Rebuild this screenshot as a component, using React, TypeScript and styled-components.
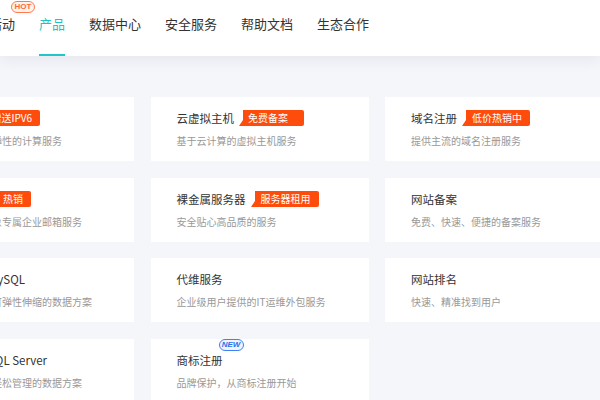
import styled, { createGlobalStyle } from "styled-components";

const GlobalStyle = createGlobalStyle`
  html, body {
    margin: 0;
    padding: 0;
    width: 600px;
    height: 400px;
    overflow: hidden;
    background: #f5f6fa;
  }
  body {
    font-family: "Noto Sans CJK SC", "Noto Sans", sans-serif;
    color: #333;
  }
`;

type Product = {
  title: string;
  desc: string;
  tag?: string;
  wideTag?: boolean;
  isNew?: boolean;
};

const navItems = [
  { label: "活动", hot: true },
  { label: "产品", active: true },
  { label: "数据中心" },
  { label: "安全服务" },
  { label: "帮助文档" },
  { label: "生态合作" },
];

// three columns, row by row; null = empty slot
const products: (Product | null)[] = [
  { title: "云主机", tag: "赠送IPV6", desc: "安全稳定、弹性的计算服务" },
  { title: "云虚拟主机", tag: "免费备案", wideTag: true, desc: "基于云计算的虚拟主机服务" },
  { title: "域名注册", tag: "低价热销中", desc: "提供主流的域名注册服务" },
  { title: "企业邮箱", tag: "热销", desc: "提升品牌形象专属企业邮箱服务" },
  { title: "裸金属服务器", tag: "服务器租用", desc: "安全贴心高品质的服务" },
  { title: "网站备案", desc: "免费、快速、便捷的备案服务" },
  { title: "云数据库MySQL", desc: "稳定可靠、可弹性伸缩的数据方案" },
  { title: "代维服务", desc: "企业级用户提供的IT运维外包服务" },
  { title: "网站排名", desc: "快速、精准找到用户" },
  { title: "云数据库SQL Server", desc: "安全稳定、轻松管理的数据方案" },
  { title: "商标注册", isNew: true, desc: "品牌保护，从商标注册开始" },
  null,
];

export default function App() {
  return (
    <>
      <GlobalStyle />
      <Header>
        <Nav>
          {navItems.map((item) => (
            <NavItem key={item.label} $active={!!item.active}>
              <NavLabel>
                {item.label}
                {item.hot && <HotBadge>HOT</HotBadge>}
              </NavLabel>
            </NavItem>
          ))}
        </Nav>
      </Header>
      <Body>
        <Grid>
          {products.map((p, i) =>
            p ? (
              <Card key={i}>
                <TitleRow>
                  <Title>
                    {p.title}
                    {p.isNew && <NewBadge>NEW</NewBadge>}
                  </Title>
                  {p.tag && <Tag $wide={!!p.wideTag}>{p.tag}</Tag>}
                </TitleRow>
                <Desc>{p.desc}</Desc>
              </Card>
            ) : (
              <div key={i} />
            )
          )}
        </Grid>
      </Body>
    </>
  );
}

const Header = styled.header`
  height: 56px;
  background: #fff;
  box-shadow: 0 4px 14px rgba(30, 45, 90, 0.07);
  position: relative;
  z-index: 1;
`;

const Nav = styled.nav`
  display: flex;
  gap: 24px;
  margin-left: -11px;
  height: 100%;
`;

const NavItem = styled.div<{ $active: boolean }>`
  box-sizing: border-box;
  height: 56px;
  padding-top: 14px;
  font-size: 13px;
  line-height: 20px;
  white-space: nowrap;
  color: ${(p) => (p.$active ? "#1fc3c6" : "#333")};
  border-bottom: 2px solid ${(p) => (p.$active ? "#22c6c8" : "transparent")};
`;

const NavLabel = styled.span`
  position: relative;
  display: inline-block;
`;

const HotBadge = styled.span`
  position: absolute;
  left: 22px;
  top: -13px;
  box-sizing: border-box;
  width: 24px;
  height: 12px;
  border: 1px solid #ff7b4f;
  border-radius: 6px;
  background: #fff1eb;
  color: #ff6a3d;
  font-family: "Liberation Sans", Arial, sans-serif;
  font-size: 8px;
  font-weight: 700;
  line-height: 10px;
  text-align: center;
`;

const Body = styled.main`
  padding-top: 41px;
`;

const Grid = styled.div`
  display: grid;
  grid-template-columns: repeat(3, 218px);
  grid-auto-rows: 64px;
  column-gap: 16.5px;
  row-gap: 16.5px;
  margin-left: -84px;
`;

const Card = styled.div`
  background: #fff;
  padding: 13px 26px 0;
  white-space: nowrap;
`;

const TitleRow = styled.div`
  display: flex;
  align-items: center;
  height: 16px;
  gap: 9px;
`;

const Title = styled.span`
  position: relative;
  font-size: 11.5px;
  line-height: 16px;
  color: #333;
`;

const NewBadge = styled.span`
  position: absolute;
  left: calc(100% - 4px);
  top: -13px;
  box-sizing: border-box;
  width: 25px;
  height: 12px;
  border: 1px solid #3f80f4;
  border-radius: 6px;
  background: #eef4ff;
  color: #2f6fe8;
  font-family: "Liberation Sans", Arial, sans-serif;
  font-size: 8px;
  font-style: italic;
  font-weight: 700;
  line-height: 10px;
  text-align: center;
`;

const Tag = styled.span<{ $wide: boolean }>`
  position: relative;
  height: 16px;
  padding: ${(p) => (p.$wide ? "0 16px 0 5px" : "0 8px 0 6px")};
  background: #fe4c0c;
  border-radius: 0 2px 2px 0;
  color: #fff;
  font-size: 10px;
  line-height: 16px;

  &::before {
    content: "";
    position: absolute;
    left: -4px;
    bottom: 0;
    border-bottom: 6px solid #fe4c0c;
    border-left: 4px solid transparent;
  }
`;

const Desc = styled.div`
  margin-top: 8px;
  font-size: 10px;
  line-height: 14px;
  color: #999;
`;
